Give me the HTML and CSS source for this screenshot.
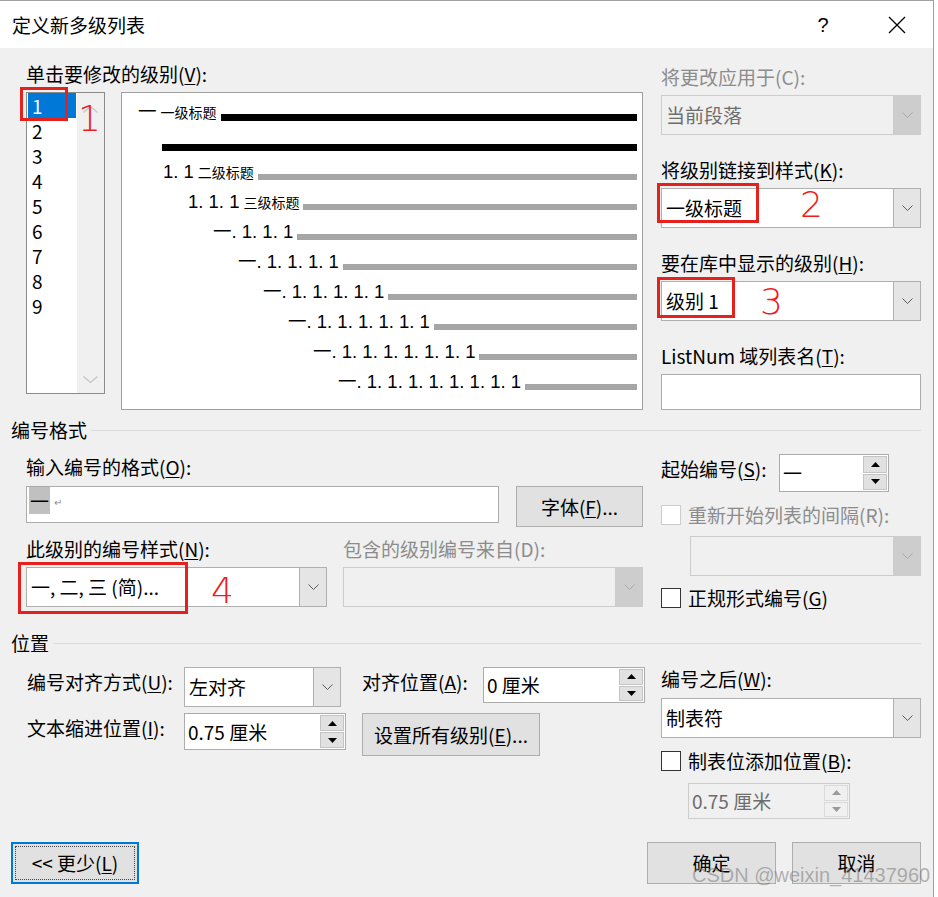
FILE: index.html
```html
<!DOCTYPE html>
<html lang="zh-CN">
<head>
    <meta charset="UTF-8">
    <title>定义新多级列表</title>
    <link rel="stylesheet" href="styles.css">
</head>
<body>
    <div class="dialog">
        <div class="titlebar">
            <span class="title">定义新多级列表</span>
            <span class="help">?</span>
            <span class="close">
                <svg width="18" height="18" viewBox="0 0 18 18"><path d="M1 1L17 17M17 1L1 17" stroke="#000" stroke-width="1.3"/></svg>
            </span>
        </div>

        <div class="content">
            <div class="section top">
                <div class="top-left">
                    <div class="label">单击要修改的级别(<u>V</u>):</div>
                    <div class="level-row">
                        <div class="level-list">
                            <div class="level-items">
                                <div class="level selected">1</div>
                                <div class="level">2</div>
                                <div class="level">3</div>
                                <div class="level">4</div>
                                <div class="level">5</div>
                                <div class="level">6</div>
                                <div class="level">7</div>
                                <div class="level">8</div>
                                <div class="level">9</div>
                            </div>
                            <div class="scrollbar">
                                <svg class="chev-light" width="15" height="7" viewBox="0 0 15 7"><polyline points="0.5,6.5 7.5,0.5 14.5,6.5"/></svg>
                                <svg class="chev-light" width="15" height="7" viewBox="0 0 15 7"><polyline points="0.5,0.5 7.5,6.5 14.5,0.5"/></svg>
                            </div>
                        </div>

                        <div class="preview">
                            <div class="prow lv1"><span class="pnum">一</span><span class="ptitle">一级标题</span><span class="bar black"></span></div>
                            <div class="prow lv2"><span class="bar black"></span></div>
                            <div class="prow lv3"><span class="pnum">1. 1</span><span class="ptitle">二级标题</span><span class="bar"></span></div>
                            <div class="prow lv4"><span class="pnum">1. 1. 1</span><span class="ptitle">三级标题</span><span class="bar"></span></div>
                            <div class="prow lv5"><span class="pnum">一. 1. 1. 1</span><span class="bar"></span></div>
                            <div class="prow lv6"><span class="pnum">一. 1. 1. 1. 1</span><span class="bar"></span></div>
                            <div class="prow lv7"><span class="pnum">一. 1. 1. 1. 1. 1</span><span class="bar"></span></div>
                            <div class="prow lv8"><span class="pnum">一. 1. 1. 1. 1. 1. 1</span><span class="bar"></span></div>
                            <div class="prow lv9"><span class="pnum">一. 1. 1. 1. 1. 1. 1. 1</span><span class="bar"></span></div>
                            <div class="prow lv10"><span class="pnum">一. 1. 1. 1. 1. 1. 1. 1. 1</span><span class="bar"></span></div>
                        </div>
                    </div>
                </div>

                <div class="side side-top">
                    <div class="label disabled">将更改应用于(C):</div>
                    <div class="combo disabled">
                        <span class="combo-text">当前段落</span>
                        <span class="combo-drop"><svg width="11" height="6" viewBox="0 0 11 6"><polyline points="0.5,0.5 5.5,5.5 10.5,0.5"/></svg></span>
                    </div>
                    <div class="label">将级别链接到样式(<u>K</u>):</div>
                    <div class="combo">
                        <span class="combo-text">一级标题</span>
                        <span class="combo-drop"><svg width="11" height="6" viewBox="0 0 11 6"><polyline points="0.5,0.5 5.5,5.5 10.5,0.5"/></svg></span>
                    </div>
                    <div class="label">要在库中显示的级别(<u>H</u>):</div>
                    <div class="combo">
                        <span class="combo-text">级别 1</span>
                        <span class="combo-drop"><svg width="11" height="6" viewBox="0 0 11 6"><polyline points="0.5,0.5 5.5,5.5 10.5,0.5"/></svg></span>
                    </div>
                    <div class="label">ListNum 域列表名(<u>T</u>):</div>
                    <div class="textbox listnum"></div>
                </div>
            </div>

            <div class="group-title">编号格式</div>
            <div class="section format">
                <div class="format-left">
                    <div class="label">输入编号的格式(<u>O</u>):</div>
                    <div class="format-row">
                        <div class="textbox number-format"><span class="num-field">一</span><span class="para-mark">↵</span></div>
                        <button class="btn font-btn">字体(<u>F</u>)...</button>
                    </div>
                    <div class="style-grid">
                        <div class="label">此级别的编号样式(<u>N</u>):</div>
                        <div class="label disabled">包含的级别编号来自(D):</div>
                        <div class="combo style-combo">
                            <span class="combo-text">一, 二, 三 (简)...</span>
                            <span class="combo-drop"><svg width="11" height="6" viewBox="0 0 11 6"><polyline points="0.5,0.5 5.5,5.5 10.5,0.5"/></svg></span>
                        </div>
                        <div class="combo disabled">
                            <span class="combo-text"></span>
                            <span class="combo-drop"><svg width="11" height="6" viewBox="0 0 11 6"><polyline points="0.5,0.5 5.5,5.5 10.5,0.5"/></svg></span>
                        </div>
                    </div>
                </div>

                <div class="side side-format">
                    <div class="start-row">
                        <span class="label start-label">起始编号(<u>S</u>):</span>
                        <div class="spin start-spin">
                            <span class="spin-text">一</span>
                            <span class="spin-btns">
                                <span class="spin-btn"><svg width="9" height="5" viewBox="0 0 9 5"><polygon points="0,5 4.5,0 9,5"/></svg></span>
                                <span class="spin-btn"><svg width="9" height="5" viewBox="0 0 9 5"><polygon points="0,0 4.5,5 9,0"/></svg></span>
                            </span>
                        </div>
                    </div>
                    <div class="check-row disabled restart-check"><span class="checkbox"></span><span>重新开始列表的间隔(R):</span></div>
                    <div class="combo disabled restart-combo">
                        <span class="combo-text"></span>
                        <span class="combo-drop"><svg width="11" height="6" viewBox="0 0 11 6"><polyline points="0.5,0.5 5.5,5.5 10.5,0.5"/></svg></span>
                    </div>
                    <div class="check-row legal-check"><span class="checkbox"></span><span>正规形式编号(<u>G</u>)</span></div>
                </div>
            </div>

            <div class="group-title group-pos">位置</div>
            <div class="section position">
                <div class="pos-grid">
                    <span class="label">编号对齐方式(<u>U</u>):</span>
                    <div class="combo align-combo">
                        <span class="combo-text">左对齐</span>
                        <span class="combo-drop"><svg width="11" height="6" viewBox="0 0 11 6"><polyline points="0.5,0.5 5.5,5.5 10.5,0.5"/></svg></span>
                    </div>
                    <span class="label">对齐位置(<u>A</u>):</span>
                    <div class="spin at-spin">
                        <span class="spin-text">0 厘米</span>
                        <span class="spin-btns">
                            <span class="spin-btn"><svg width="9" height="5" viewBox="0 0 9 5"><polygon points="0,5 4.5,0 9,5"/></svg></span>
                            <span class="spin-btn"><svg width="9" height="5" viewBox="0 0 9 5"><polygon points="0,0 4.5,5 9,0"/></svg></span>
                        </span>
                    </div>
                    <span class="label">文本缩进位置(<u>I</u>):</span>
                    <div class="spin indent-spin">
                        <span class="spin-text">0.75 厘米</span>
                        <span class="spin-btns">
                            <span class="spin-btn"><svg width="9" height="5" viewBox="0 0 9 5"><polygon points="0,5 4.5,0 9,5"/></svg></span>
                            <span class="spin-btn"><svg width="9" height="5" viewBox="0 0 9 5"><polygon points="0,0 4.5,5 9,0"/></svg></span>
                        </span>
                    </div>
                    <button class="btn set-all">设置所有级别(<u>E</u>)...</button>
                </div>

                <div class="side side-pos">
                    <div class="label">编号之后(<u>W</u>):</div>
                    <div class="combo">
                        <span class="combo-text">制表符</span>
                        <span class="combo-drop"><svg width="11" height="6" viewBox="0 0 11 6"><polyline points="0.5,0.5 5.5,5.5 10.5,0.5"/></svg></span>
                    </div>
                    <div class="check-row tab-check"><span class="checkbox"></span><span>制表位添加位置(<u>B</u>):</span></div>
                    <div class="spin disabled tab-spin">
                        <span class="spin-text">0.75 厘米</span>
                        <span class="spin-btns">
                            <span class="spin-btn"><svg width="9" height="5" viewBox="0 0 9 5"><polygon points="0,5 4.5,0 9,5"/></svg></span>
                            <span class="spin-btn"><svg width="9" height="5" viewBox="0 0 9 5"><polygon points="0,0 4.5,5 9,0"/></svg></span>
                        </span>
                    </div>
                </div>
            </div>

            <div class="footer">
                <button class="btn less-btn">&lt;&lt; 更少(<u>L</u>)</button>
                <button class="btn">确定</button>
                <button class="btn">取消</button>
            </div>
        </div>

        <!-- red annotations drawn over the dialog -->
        <div class="mark mark-1"></div>
        <div class="mark-num num-1">1</div>
        <div class="mark mark-2"></div>
        <div class="mark-num num-2">2</div>
        <div class="mark mark-3"></div>
        <div class="mark-num num-3">3</div>
        <div class="mark mark-4"></div>
        <div class="mark-num num-4">4</div>

        <div class="watermark">CSDN @weixin_41437960</div>
    </div>
</body>
</html>
```

FILE: styles.css
```css
* {
    box-sizing: border-box;
}

body {
    margin: 0;
    background: #fff;
    font-family: "Noto Sans CJK SC", "Microsoft YaHei", sans-serif;
    font-size: 19px;
    line-height: 24px;
    color: #000;
}

u {
    text-underline-offset: 2px;
}

.dialog {
    position: relative;
    width: 934px;
    height: 897px;
    background: #f0f0f0;
    border-top: 1px solid #a0a0a0;
    border-right: 1px solid #a0a0a0;
    overflow: hidden;
}

.titlebar {
    height: 47px;
    background: #fff;
    display: flex;
    align-items: center;
    padding: 0 24px 0 12px;
}

.title {
    flex: 1;
}

.help {
    width: 20px;
    margin-right: 52px;
    text-align: center;
    font-family: "Liberation Sans", sans-serif;
    font-size: 20px;
}

.close {
    width: 24px;
    height: 24px;
    display: flex;
    align-items: center;
    justify-content: center;
}

.content {
    padding: 0 12px 0 10px;
}

.section {
    display: flex;
    gap: 18px;
    align-items: flex-start;
}

.label.disabled,
.check-row.disabled {
    color: #8c8c8c;
}

/* level list + preview */
.top-left {
    width: 633px;
    flex-shrink: 0;
    padding-left: 16px;
    margin-top: 14px;
}

.level-row {
    display: flex;
    gap: 16px;
    margin-top: 6px;
}

.level-list {
    width: 79px;
    height: 302px;
    border: 1px solid #8a8a8a;
    background: #fff;
    display: flex;
}

.level-items {
    width: 50px;
    padding: 0 1px;
}

.level {
    height: 25px;
    line-height: 25px;
    padding-left: 4px;
}

.level.selected {
    background: #0078d7;
    color: #fff;
}

.scrollbar {
    width: 27px;
    background: #f0f0f0;
    display: flex;
    flex-direction: column;
    justify-content: space-between;
    align-items: center;
    padding: 13px 0 10px;
}

.chev-light polyline {
    fill: none;
    stroke: #c4c4c4;
    stroke-width: 1.2;
}

.preview {
    width: 522px;
    height: 318px;
    border: 1px solid #a0a0a0;
    background: #fff;
    padding: 4px 5px 0 0;
}

.prow {
    display: flex;
    align-items: center;
    height: 30px;
}

.lv1 { padding-left: 16px; }
.lv2 { padding-left: 40px; }
.lv3 { padding-left: 41px; }
.lv4 { padding-left: 66px; }
.lv5 { padding-left: 91px; }
.lv6 { padding-left: 116px; }
.lv7 { padding-left: 141px; }
.lv8 { padding-left: 166px; }
.lv9 { padding-left: 191px; }
.lv10 { padding-left: 216px; }

.pnum {
    font-family: "Liberation Sans", "Noto Sans CJK SC", sans-serif;
    font-size: 18.5px;
    line-height: 30px;
    white-space: pre;
}

.ptitle {
    font-size: 14px;
    line-height: 30px;
    margin-left: 4px;
}

.bar {
    flex: 1;
    height: 6px;
    margin: 10px 0 0 4px;
    background: #a6a6a6;
}

.bar.black {
    height: 7px;
    background: #000;
}

.lv2 .bar {
    margin-left: 0;
}

/* right column */
.side {
    width: 260px;
    flex-shrink: 0;
}

.side-top {
    margin-top: 17px;
}

.side-top .label {
    margin-bottom: 6px;
}

.side-top .combo {
    margin-bottom: 23px;
}

.textbox {
    background: #fff;
    border: 1px solid #acacac;
}

.listnum {
    height: 36px;
}

.combo {
    display: flex;
    height: 40px;
    background: #fff;
    border: 1px solid #b0b0b0;
}

.combo-text {
    flex: 1;
    padding-left: 4px;
    line-height: 38px;
    white-space: nowrap;
    overflow: hidden;
}

.combo-drop {
    width: 27px;
    background: #e5e5e5;
    border-left: 1px solid #b0b0b0;
    display: flex;
    align-items: center;
    justify-content: center;
}

.combo-drop polyline {
    fill: none;
    stroke: #5a5a5a;
    stroke-width: 1;
}

.combo.disabled {
    background: #f0f0f0;
    border-color: #cccccc;
    color: #6d6d6d;
}

.combo.disabled .combo-drop {
    background: #cdcdcd;
    border-left-color: #cccccc;
}

.combo.disabled polyline {
    stroke: #a8a8a8;
}

/* group headers */
.group-title {
    display: flex;
    align-items: center;
    margin-top: 8px;
    padding-left: 1px;
}

.group-title::after {
    content: "";
    flex: 1;
    height: 1px;
    margin-left: 4px;
    background: #dcdcdc;
}

.group-pos {
    margin-top: 21px;
}

/* number format */
.format-left {
    width: 633px;
    flex-shrink: 0;
    padding-left: 16px;
    margin-top: 13px;
}

.format-row {
    display: flex;
    align-items: flex-start;
    margin-top: 7px;
}

.number-format {
    width: 473px;
    height: 37px;
    display: flex;
    align-items: flex-start;
    padding-left: 2px;
}

.num-field {
    width: 21px;
    height: 27px;
    line-height: 27px;
    text-align: center;
    background: #c0c0c0;
}

.para-mark {
    font-size: 10px;
    line-height: 12px;
    color: #8a8a8a;
    margin: 9px 0 0 4px;
}

.btn {
    font: inherit;
    color: #000;
    background: #e1e1e1;
    border: 1px solid #adadad;
    padding: 0;
}

.font-btn {
    width: 127px;
    height: 41px;
    margin-left: 17px;
}

.style-grid {
    display: grid;
    grid-template-columns: 317px 300px;
    row-gap: 6px;
    margin-top: 10px;
}

.style-combo {
    width: 301px;
}

.side-format {
    margin-top: 12px;
}

.start-row {
    display: flex;
    align-items: flex-start;
}

.start-label {
    width: 118px;
    margin-top: 3px;
}

.spin {
    display: flex;
    background: #fff;
    border: 1px solid #acacac;
}

.spin-text {
    flex: 1;
    display: flex;
    align-items: center;
    padding-left: 3px;
    white-space: nowrap;
}

.spin-btns {
    width: 25px;
    display: flex;
    flex-direction: column;
    gap: 1px;
    padding: 1px 1px 1px 0;
}

.spin-btn {
    flex: 1;
    display: flex;
    align-items: center;
    justify-content: center;
    background: #e1e1e1;
    border: 1px solid #c4c4c4;
}

.spin-btn polygon {
    fill: #000;
}

.spin.disabled {
    background: #f0f0f0;
    border-color: #cccccc;
    color: #6d6d6d;
}

.spin.disabled .spin-btn {
    background: #f0f0f0;
    border-color: #dadada;
}

.spin.disabled polygon {
    fill: #9a9a9a;
}

.start-spin {
    width: 110px;
    height: 38px;
}

.check-row {
    display: flex;
    align-items: center;
    gap: 7px;
    height: 24px;
}

.checkbox {
    width: 20px;
    height: 20px;
    flex-shrink: 0;
    background: #fff;
    border: 1px solid #333;
}

.check-row.disabled .checkbox {
    border-color: #cccccc;
}

.restart-check {
    margin-top: 11px;
}

.restart-combo {
    width: 231px;
    margin: 9px 0 0 29px;
}

.legal-check {
    margin-top: 10px;
}

/* position */
.position {
    gap: 16px;
}

.pos-grid {
    width: 635px;
    flex-shrink: 0;
    padding-left: 17px;
    margin-top: 12px;
    display: grid;
    grid-template-columns: 157px 178px 121px 162px;
    row-gap: 6px;
    align-items: start;
    justify-items: start;
}

.pos-grid .label {
    margin-top: 3px;
}

.align-combo {
    width: 157px;
}

.at-spin {
    width: 162px;
    height: 36px;
}

.indent-spin {
    width: 162px;
    height: 37px;
}

.set-all {
    grid-column: 3 / span 2;
    width: 178px;
    height: 43px;
}

.side-pos {
    margin-top: 12px;
}

.side-pos .combo {
    margin-top: 7px;
}

.tab-check {
    margin-top: 11px;
}

.tab-spin {
    width: 162px;
    height: 36px;
    margin: 10px 0 0 27px;
}

/* footer */
.footer {
    display: flex;
    gap: 16px;
    margin-top: 23px;
    padding-left: 1px;
}

.footer .btn {
    width: 129px;
    height: 42px;
}

.footer .less-btn {
    width: 128px;
    margin-right: auto;
    border: 2px solid #0078d7;
    outline: 1px dotted #444;
    outline-offset: -5px;
}

/* annotations */
.mark {
    position: absolute;
    border: 3px solid #e5211d;
}

.mark-1 { left: 20px; top: 86px; width: 48px; height: 34px; }
.mark-2 { left: 657px; top: 182px; width: 102px; height: 40px; }
.mark-3 { left: 657px; top: 276px; width: 78px; height: 41px; }
.mark-4 { left: 18px; top: 561px; width: 170px; height: 52px; }

.mark-num {
    position: absolute;
    font-family: "DejaVu Sans", sans-serif;
    font-weight: 200;
    font-size: 36px;
    line-height: 36px;
    color: #f01c1c;
}

.num-1 { left: 78px; top: 100px; }
.num-2 { left: 800px; top: 186px; }
.num-3 { left: 760px; top: 283px; }
.num-4 { left: 211px; top: 572px; }

.watermark {
    position: absolute;
    left: 692px;
    top: 862px;
    font-family: "Liberation Sans", sans-serif;
    font-size: 20px;
    color: rgba(120, 120, 120, 0.55);
    white-space: nowrap;
}
```
